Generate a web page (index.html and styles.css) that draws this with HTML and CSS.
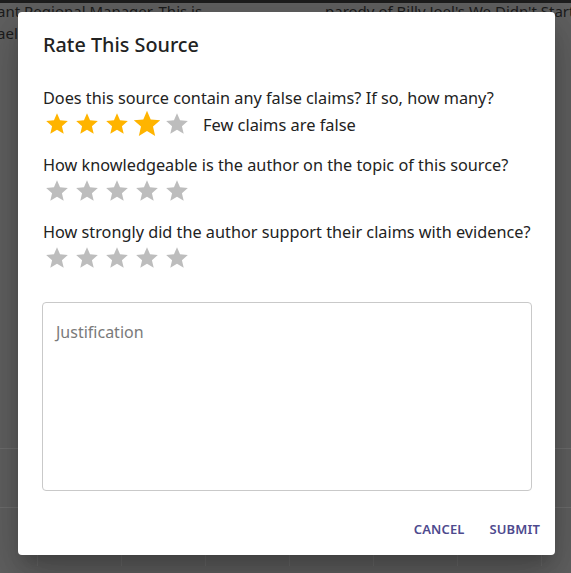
FILE: index.html
```html
<!DOCTYPE html>
<html>
<head>
<meta charset="utf-8">
<link rel="stylesheet" href="styles.css">
</head>
<body>
<div class="page">
  <div class="topbar"></div>
  <div class="bg-text">
    <div class="bg-col left">
      <p>ant Regional Manager. This is</p>
      <p>ael</p>
    </div>
    <div class="bg-col right">
      <p>parody of Billy Joel's We Didn't Start the Fire</p>
    </div>
  </div>
  <div class="bg-grid">
    <div class="cell"></div><div class="cell"></div><div class="cell"></div><div class="cell"></div><div class="cell"></div><div class="cell"></div><div class="cell"></div><div class="cell"></div>
    <div class="cell"></div><div class="cell"></div><div class="cell"></div><div class="cell"></div><div class="cell"></div><div class="cell"></div><div class="cell"></div><div class="cell"></div>
  </div>
</div>

<div class="overlay">
  <div class="dialog">
    <h2 class="title">Rate This Source</h2>

    <div class="question">
      <p class="q-text">Does this source contain any false claims? If so, how many?</p>
      <div class="rating">
        <span class="star on"><svg viewBox="0 0 24 24"><path d="M12 17.27L18.18 21l-1.64-7.03L22 9.24l-7.19-.61L12 2 9.19 8.63 2 9.24l5.46 4.73L5.82 21z"/></svg></span>
        <span class="star on"><svg viewBox="0 0 24 24"><path d="M12 17.27L18.18 21l-1.64-7.03L22 9.24l-7.19-.61L12 2 9.19 8.63 2 9.24l5.46 4.73L5.82 21z"/></svg></span>
        <span class="star on"><svg viewBox="0 0 24 24"><path d="M12 17.27L18.18 21l-1.64-7.03L22 9.24l-7.19-.61L12 2 9.19 8.63 2 9.24l5.46 4.73L5.82 21z"/></svg></span>
        <span class="star on hover"><svg viewBox="0 0 24 24"><path d="M12 17.27L18.18 21l-1.64-7.03L22 9.24l-7.19-.61L12 2 9.19 8.63 2 9.24l5.46 4.73L5.82 21z"/></svg></span>
        <span class="star"><svg viewBox="0 0 24 24"><path d="M12 17.27L18.18 21l-1.64-7.03L22 9.24l-7.19-.61L12 2 9.19 8.63 2 9.24l5.46 4.73L5.82 21z"/></svg></span>
        <span class="rating-label">Few claims are false</span>
      </div>
    </div>

    <div class="question">
      <p class="q-text">How knowledgeable is the author on the topic of this source?</p>
      <div class="rating">
        <span class="star"><svg viewBox="0 0 24 24"><path d="M12 17.27L18.18 21l-1.64-7.03L22 9.24l-7.19-.61L12 2 9.19 8.63 2 9.24l5.46 4.73L5.82 21z"/></svg></span>
        <span class="star"><svg viewBox="0 0 24 24"><path d="M12 17.27L18.18 21l-1.64-7.03L22 9.24l-7.19-.61L12 2 9.19 8.63 2 9.24l5.46 4.73L5.82 21z"/></svg></span>
        <span class="star"><svg viewBox="0 0 24 24"><path d="M12 17.27L18.18 21l-1.64-7.03L22 9.24l-7.19-.61L12 2 9.19 8.63 2 9.24l5.46 4.73L5.82 21z"/></svg></span>
        <span class="star"><svg viewBox="0 0 24 24"><path d="M12 17.27L18.18 21l-1.64-7.03L22 9.24l-7.19-.61L12 2 9.19 8.63 2 9.24l5.46 4.73L5.82 21z"/></svg></span>
        <span class="star"><svg viewBox="0 0 24 24"><path d="M12 17.27L18.18 21l-1.64-7.03L22 9.24l-7.19-.61L12 2 9.19 8.63 2 9.24l5.46 4.73L5.82 21z"/></svg></span>
      </div>
    </div>

    <div class="question">
      <p class="q-text">How strongly did the author support their claims with evidence?</p>
      <div class="rating">
        <span class="star"><svg viewBox="0 0 24 24"><path d="M12 17.27L18.18 21l-1.64-7.03L22 9.24l-7.19-.61L12 2 9.19 8.63 2 9.24l5.46 4.73L5.82 21z"/></svg></span>
        <span class="star"><svg viewBox="0 0 24 24"><path d="M12 17.27L18.18 21l-1.64-7.03L22 9.24l-7.19-.61L12 2 9.19 8.63 2 9.24l5.46 4.73L5.82 21z"/></svg></span>
        <span class="star"><svg viewBox="0 0 24 24"><path d="M12 17.27L18.18 21l-1.64-7.03L22 9.24l-7.19-.61L12 2 9.19 8.63 2 9.24l5.46 4.73L5.82 21z"/></svg></span>
        <span class="star"><svg viewBox="0 0 24 24"><path d="M12 17.27L18.18 21l-1.64-7.03L22 9.24l-7.19-.61L12 2 9.19 8.63 2 9.24l5.46 4.73L5.82 21z"/></svg></span>
        <span class="star"><svg viewBox="0 0 24 24"><path d="M12 17.27L18.18 21l-1.64-7.03L22 9.24l-7.19-.61L12 2 9.19 8.63 2 9.24l5.46 4.73L5.82 21z"/></svg></span>
      </div>
    </div>

    <div class="field">
      <textarea class="justification" placeholder="Justification"></textarea>
    </div>

    <div class="actions">
      <button class="btn">Cancel</button>
      <button class="btn">Submit</button>
    </div>
  </div>
</div>
</body>
</html>
```

FILE: styles.css
```css
html, body {
  margin: 0;
  padding: 0;
  width: 571px;
  height: 573px;
  overflow: hidden;
}

body {
  background: #616161;
  font-family: "Noto Sans", "Open Sans", sans-serif;
  position: relative;
}

.page {
  width: 571px;
  height: 573px;
  display: flex;
  flex-direction: column;
  overflow: hidden;
}

.topbar {
  height: 3px;
  background: #1e1e1e;
}

.bg-text {
  display: grid;
  grid-template-columns: 328px 1fr;
  height: 40px;
  margin-top: -3px;
  margin-left: -3px;
  overflow: hidden;
}

.bg-col {
  overflow: hidden;
}

.bg-col p {
  margin: 0;
  font-size: 15px;
  line-height: 22px;
  color: #1c1c1c;
  white-space: nowrap;
}

.bg-grid {
  margin-top: 408px;
  margin-left: -46px;
  display: grid;
  grid-template-columns: repeat(8, 84px);
  grid-auto-rows: 59px;
}

.cell {
  border-top: 1px solid #6f6f6f;
  border-right: 1px solid #6a6a6a;
}

.overlay {
  position: absolute;
  inset: 0;
}

.dialog {
  position: absolute;
  left: 18px;
  top: 12px;
  width: 537px;
  height: 543px;
  box-sizing: border-box;
  background: #ffffff;
  border-radius: 4px;
  box-shadow: 0 11px 15px -7px rgba(0,0,0,0.2), 0 24px 38px 3px rgba(0,0,0,0.14), 0 9px 46px 8px rgba(0,0,0,0.12);
  padding: 0 24px 0 25px;
  display: flex;
  flex-direction: column;
}

.title {
  margin: 19px 0 0;
  font-size: 19.8px;
  font-weight: 500;
  line-height: 28px;
  color: #222222;
}

.question {
  display: flex;
  flex-direction: column;
}

.question:first-of-type {
  margin-top: 29px;
}

.question + .question {
  margin-top: 16px;
}

.q-text {
  margin: 0;
  font-size: 16.25px;
  line-height: 20px;
  color: #222222;
}

.rating {
  display: flex;
  align-items: center;
  height: 30px;
  margin-top: 1px;
  margin-left: -1px;
}

.star {
  width: 30px;
  height: 30px;
  display: flex;
  align-items: center;
  justify-content: center;
}

.star svg {
  width: 26px;
  height: 26px;
  fill: #bdbdbd;
}

.star.on svg {
  fill: #ffb400;
}

.star.hover svg {
  transform: scale(1.22);
}

.rating-label {
  margin-left: 11px;
  font-size: 16.4px;
  color: #222222;
}

.field {
  margin-top: 29px;
  margin-right: -1px;
  margin-left: -1px;
}

.justification {
  display: block;
  width: 100%;
  height: 189px;
  box-sizing: border-box;
  border: 1px solid #c9c9c9;
  border-radius: 4px;
  padding: 18px 13px;
  resize: none;
  font-family: inherit;
  font-size: 16px;
  color: #222;
  outline: none;
}

.justification::placeholder {
  color: #7a7a7a;
}

.actions {
  display: flex;
  justify-content: flex-end;
  gap: 9px;
  margin-top: 23px;
  margin-right: -17px;
}

.btn {
  background: none;
  border: none;
  padding: 6px 8px;
  font-family: inherit;
  font-size: 13px;
  font-weight: 600;
  text-transform: uppercase;
  color: #4e4a8e;
  letter-spacing: 0.01em;
}
```
